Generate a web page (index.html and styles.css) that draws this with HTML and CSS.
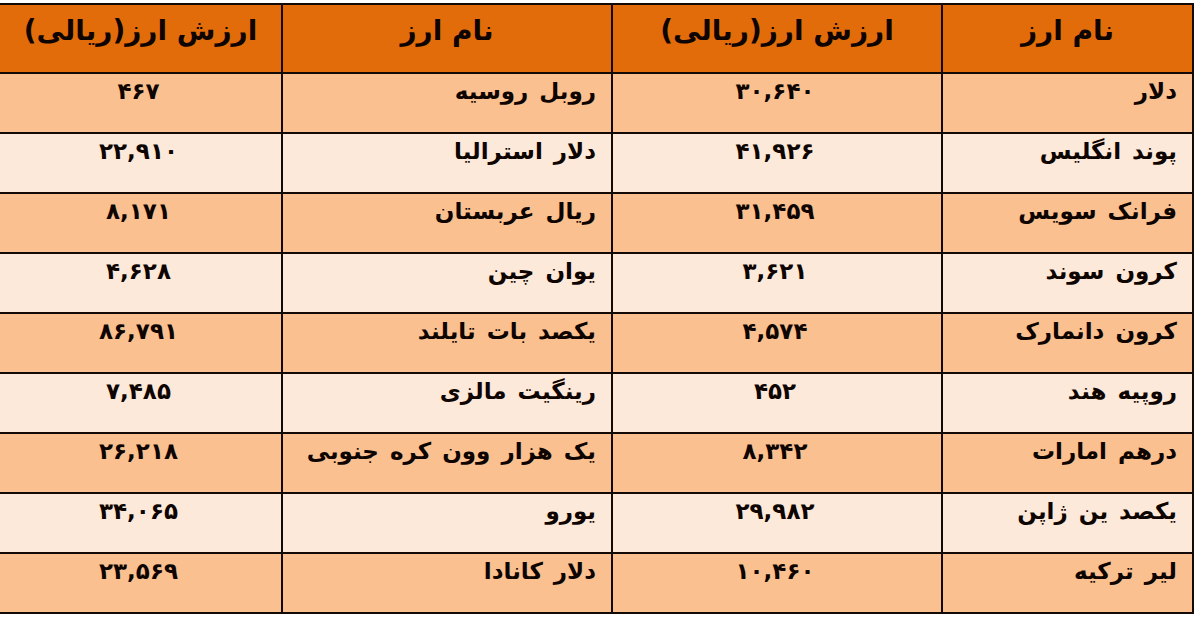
FILE: index.html
```html
<!DOCTYPE html>
<html lang="fa" dir="rtl">
<head>
<meta charset="utf-8">
<link rel="stylesheet" href="styles.css">
</head>
<body>
<div class="wrap">
<table class="rates">
<colgroup>
<col class="c-name1"><col class="c-val"><col class="c-name"><col class="c-val2">
</colgroup>
<thead>
<tr><th>نام ارز</th><th>ارزش ارز(ریالی)</th><th>نام ارز</th><th>ارزش ارز(ریالی)</th></tr>
</thead>
<tbody>
<tr class="dark"><td class="name">دلار</td><td class="num">۳۰,۶۴۰</td><td class="name">روبل روسیه</td><td class="num">۴۶۷</td></tr>
<tr class="light"><td class="name">پوند انگلیس</td><td class="num">۴۱,۹۲۶</td><td class="name">دلار استرالیا</td><td class="num">۲۲,۹۱۰</td></tr>
<tr class="dark"><td class="name">فرانک سویس</td><td class="num">۳۱,۴۵۹</td><td class="name">ریال عربستان</td><td class="num">۸,۱۷۱</td></tr>
<tr class="light"><td class="name">کرون سوند</td><td class="num">۳,۶۲۱</td><td class="name">یوان چین</td><td class="num">۴,۶۲۸</td></tr>
<tr class="dark"><td class="name">کرون دانمارک</td><td class="num">۴,۵۷۴</td><td class="name">یکصد بات تایلند</td><td class="num">۸۶,۷۹۱</td></tr>
<tr class="light"><td class="name">روپیه هند</td><td class="num">۴۵۲</td><td class="name">رینگیت مالزی</td><td class="num">۷,۴۸۵</td></tr>
<tr class="dark"><td class="name">درهم امارات</td><td class="num">۸,۳۴۲</td><td class="name">یک هزار وون کره جنوبی</td><td class="num">۲۶,۲۱۸</td></tr>
<tr class="light"><td class="name">یکصد ین ژاپن</td><td class="num">۲۹,۹۸۲</td><td class="name">یورو</td><td class="num">۳۴,۰۶۵</td></tr>
<tr class="dark"><td class="name">لیر ترکیه</td><td class="num">۱۰,۴۶۰</td><td class="name">دلار کانادا</td><td class="num">۲۳,۵۶۹</td></tr>
</tbody>
</table>
</div>
</body>
</html>
```

FILE: styles.css
```css
html, body {
  margin: 0;
  padding: 0;
  background: #ffffff;
}
body {
  width: 1200px;
  height: 618px;
  overflow: hidden;
  font-family: "DejaVu Sans", sans-serif;
}
.wrap {
  padding-top: 3px;
  padding-right: 6px;
  margin-left: -2px;
}
.rates {
  direction: rtl;
  border-collapse: collapse;
  table-layout: fixed;
  width: 1194px;
  color: #0e0400;
}
.c-name1 { width: 251px; }
.c-val { width: 330px; }
.c-name { width: 330px; }
.c-val2 { width: 283px; }
.rates th,
.rates td {
  border: 2px solid #140a05;
  vertical-align: top;
  font-weight: bold;
  white-space: nowrap;
  overflow: hidden;
}
.rates th {
  background: #e36c0a;
  height: 69px;
  padding: 8px 0 0;
  font-size: 28px;
  line-height: 36px;
  text-align: center;
  box-sizing: border-box;
}
.rates td {
  height: 60px;
  box-sizing: border-box;
  padding: 2px 15px 0;
  font-size: 23px;
  line-height: 30px;
  word-spacing: 3px;
}
.rates .name { text-align: right; }
.rates .num {
  text-align: center;
  padding-left: 0;
  padding-right: 4px;
  letter-spacing: 5px;
}
.dark td { background: #fac08f; }
.light td { background: #fde9d9; }
```
